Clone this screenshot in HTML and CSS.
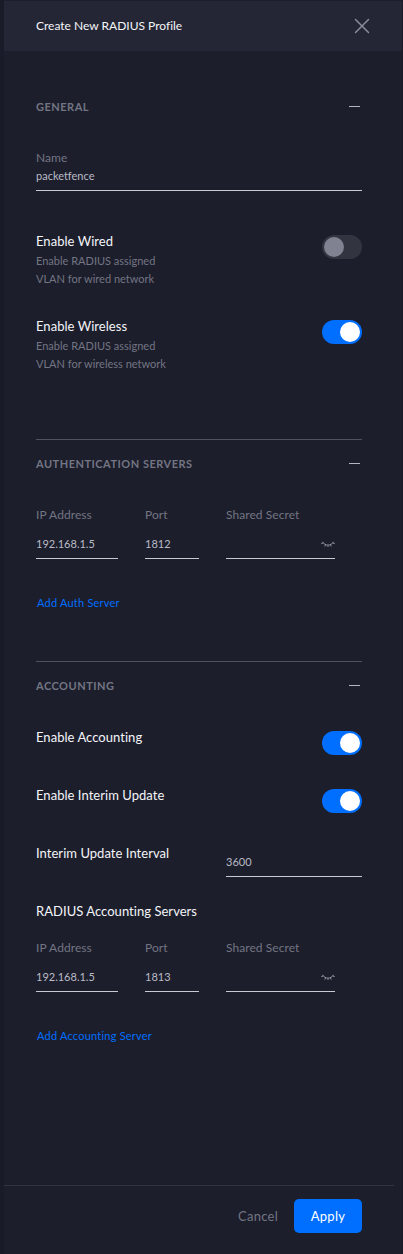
FILE: index.html
```
<!DOCTYPE html>
<html lang="en">
<head>
<meta charset="utf-8">
<title>Create New RADIUS Profile</title>
<link rel="stylesheet" href="styles.css">
</head>
<body>
<div class="panel">
  <header class="header">
    <h1 class="title">Create New RADIUS Profile</h1>
    <svg class="close" width="16" height="16" viewBox="0 0 16 16"><path d="M1.5 1.5l13 13M14.5 1.5l-13 13"/></svg>
  </header>
  <main class="content">
    <section class="section general">
      <div class="section-head"><h2>General</h2><span class="collapse"></span></div>
      <div class="field name-field">
        <label class="label">Name</label>
        <div class="value">packetfence</div>
      </div>
      <div class="row tall">
        <div>
          <div class="row-label">Enable Wired</div>
          <p class="hint">Enable RADIUS assigned<br>VLAN for wired network</p>
        </div>
        <span class="toggle"></span>
      </div>
      <div class="row tall">
        <div>
          <div class="row-label">Enable Wireless</div>
          <p class="hint">Enable RADIUS assigned<br>VLAN for wireless network</p>
        </div>
        <span class="toggle on"></span>
      </div>
    </section>
    <section class="section auth">
      <div class="section-head"><h2>Authentication Servers</h2><span class="collapse"></span></div>
      <div class="servers">
        <div class="field"><label class="label">IP Address</label><div class="value">192.168.1.5</div></div>
        <div class="field"><label class="label">Port</label><div class="value">1812</div></div>
        <div class="field"><label class="label">Shared Secret</label><div class="value secret"><svg width="14" height="7" viewBox="0 0 14 7"><path d="M1.500 .8C4 5.200 10 5.200 12.500 .8M2.300 2L.3 2.600M4.500 4L3.800 5.500M7 4.500V6M9.500 4L10.200 5.500M11.700 2L13.700 2.600"/></svg></div></div>
      </div>
      <a class="link">Add Auth Server</a>
    </section>
    <section class="section accounting">
      <div class="section-head"><h2>Accounting</h2><span class="collapse"></span></div>
      <div class="row"><div class="row-label">Enable Accounting</div><span class="toggle on"></span></div>
      <div class="row"><div class="row-label">Enable Interim Update</div><span class="toggle on"></span></div>
      <div class="row"><div class="row-label">Interim Update Interval</div><div class="value interval">3600</div></div>
      <div class="row-label">RADIUS Accounting Servers</div>
      <div class="servers">
        <div class="field"><label class="label">IP Address</label><div class="value">192.168.1.5</div></div>
        <div class="field"><label class="label">Port</label><div class="value">1813</div></div>
        <div class="field"><label class="label">Shared Secret</label><div class="value secret"><svg width="14" height="7" viewBox="0 0 14 7"><path d="M1.500 .8C4 5.200 10 5.200 12.500 .8M2.300 2L.3 2.600M4.500 4L3.800 5.500M7 4.500V6M9.500 4L10.200 5.500M11.700 2L13.700 2.600"/></svg></div></div>
      </div>
      <a class="link">Add Accounting Server</a>
    </section>
  </main>
  <footer class="footer">
    <button class="btn cancel">Cancel</button>
    <button class="btn apply">Apply</button>
  </footer>
</div>
</body>
</html>
```

FILE: styles.css
```
* { box-sizing: border-box; }
body {
  margin: 0;
  background: #1a1b29;
  color: #f4f5f8;
  font-family: Lato, sans-serif;
  font-size: 13px;
  font-variant-ligatures: none;
}
.panel {
  display: flex;
  flex-direction: column;
  height: 1254px;
  margin-left: 4px;
  margin-right: 1px;
  padding-top: 1px;
  background: #1c1e2c;
}
.header {
  display: flex;
  align-items: center;
  justify-content: space-between;
  height: 50px;
  padding: 0 32px;
  background: #242635;
}
.title { margin: 0; font-size: 12px; font-weight: 400; line-height: 20px; }
.close { fill: none; stroke: #8a8c9b; stroke-width: 1.5; stroke-linecap: round; }
.content { width: 358px; padding-left: 32px; flex: 1; }
.section { border-top: 1px solid #50525e; }
.general { height: 388px; padding-top: 45px; border-top-color: transparent; }
.auth { height: 222px; padding-top: 14px; }
.accounting { padding-top: 14px; }
.section-head { display: flex; align-items: center; justify-content: space-between; height: 20px; }
.section-head h2 {
  margin: 0 0 2px;
  color: #737583;
  font-size: 11px;
  font-weight: 700;
  letter-spacing: .5px;
  text-transform: uppercase;
}
.collapse { width: 11px; height: 1px; margin: 0 2px 1px 0; background: #b4b5be; }
.label { display: block; color: #737583; font-size: 12px; letter-spacing: .06px; line-height: 18px; }
.value {
  height: 24px;
  border-bottom: 1px solid #c9cad1;
  color: #babbc5;
  font-size: 11px;
  line-height: 18px;
}
.name-field { margin: 32px 0 40px; }
.row { display: flex; justify-content: space-between; height: 58px; }
.row.tall { height: 85px; }
.row-label { font-size: 13px; letter-spacing: .04px; line-height: 20px; }
.hint { margin: 1px 0 0; color: #737583; font-size: 11px; line-height: 18px; }
.toggle { width: 40px; height: 24px; margin-top: 4px; padding: 2px; border-radius: 12px; background: #323440; }
.toggle::before { content: ""; display: block; width: 20px; height: 20px; border-radius: 50%; background: #808291; }
.toggle.on { background: #006fff; }
.toggle.on::before { margin-left: auto; background: #fff; }
.servers { display: grid; grid-template-columns: 82px 54px 109px; gap: 27px; margin-top: 32px; }
.servers .value { margin-top: 11px; }
.secret { display: flex; justify-content: flex-end; padding-top: 6px; }
.secret svg { fill: none; stroke: #a0a2ad; stroke-width: .9; }
.link { display: block; margin: 34px 0 0 1px; color: #006fff; font-size: 11px; letter-spacing: .22px; line-height: 20px; }
.accounting > .row:nth-child(2) { margin-top: 31px; }
.accounting .servers { margin-top: 18px; }
.interval { width: 136px; margin-top: 10px; }
.footer {
  display: flex;
  justify-content: flex-end;
  gap: 16px;
  height: 69px;
  margin-right: 8px;
  padding: 13px 32px 0 0;
  border-top: 1px solid #323440;
}
.btn { height: 34px; padding: 0; border: 0; background: none; color: #737583; font: 13px Lato, sans-serif; letter-spacing: .25px; }
.apply { width: 68px; border-radius: 5px; background: #006fff; color: #fff; }
```
